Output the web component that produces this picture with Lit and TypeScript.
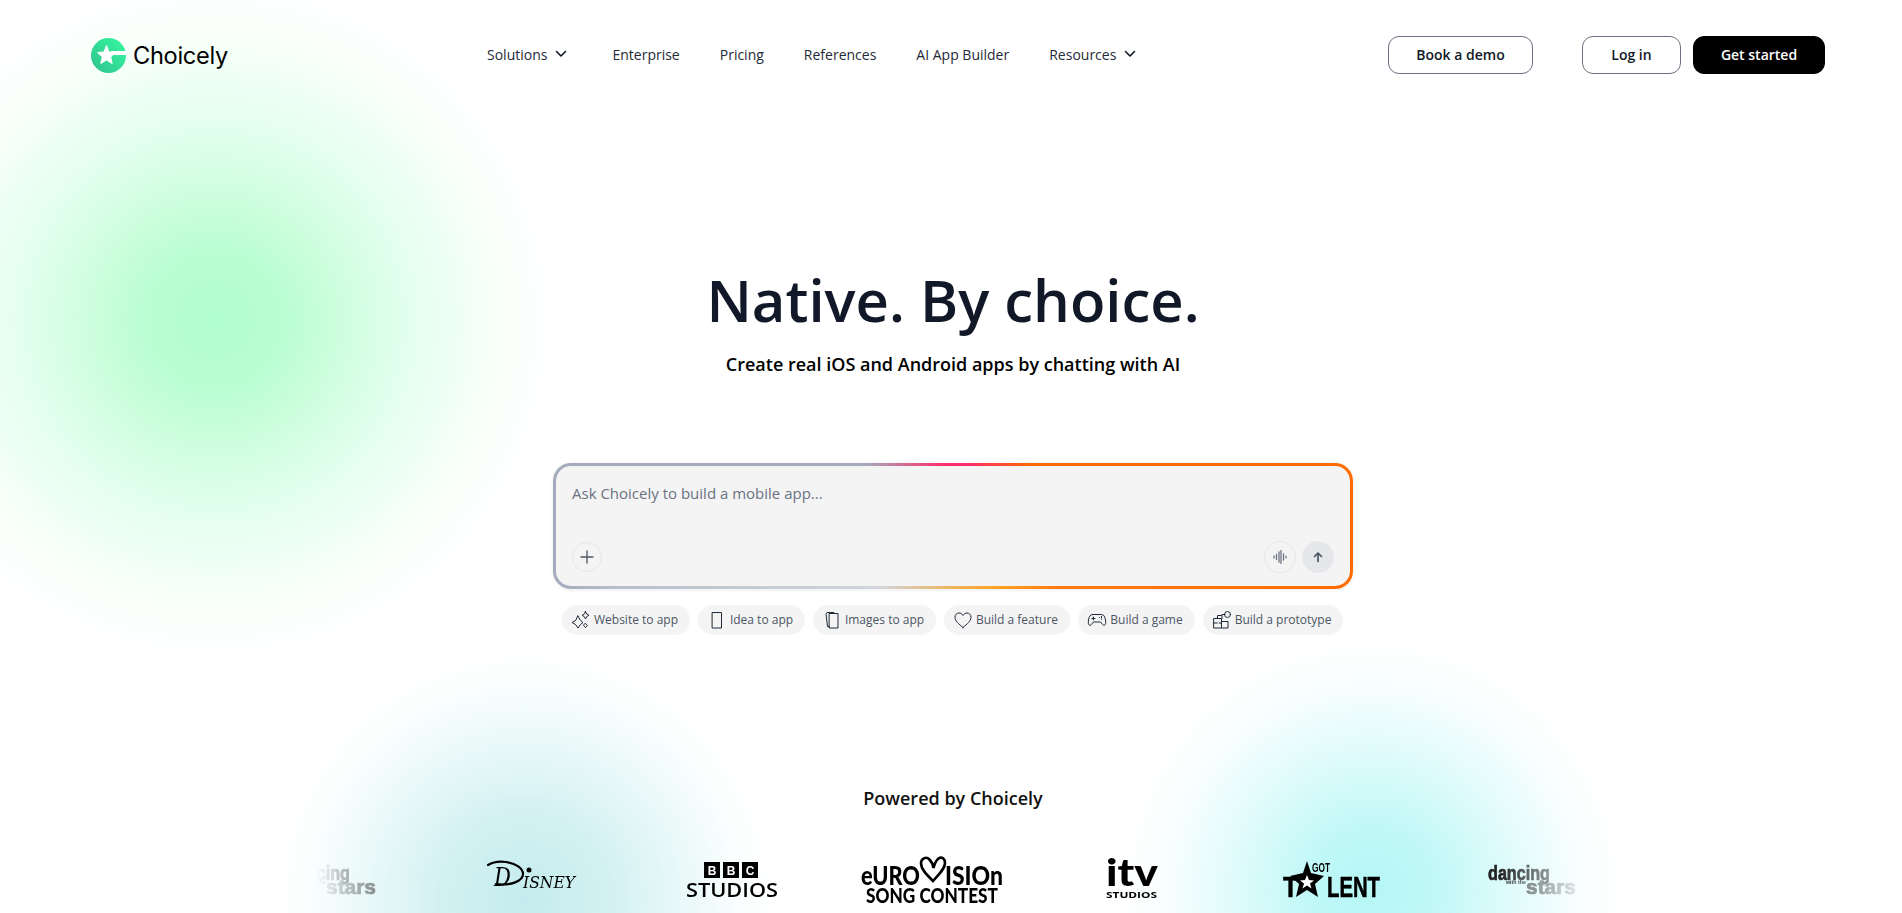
import { LitElement, html, css, svg } from "lit";
import { customElement } from "lit/decorators.js";

const chevron = html`<svg class="chev" viewBox="0 0 12 8" width="12" height="8"><path d="M1.5 1.5 6 6l4.5-4.5" fill="none" stroke="#111827" stroke-width="1.6" stroke-linecap="round" stroke-linejoin="round"/></svg>`;

const chipIcons: Record<string, unknown> = {
  sparkle: svg`<path d="M7 6 9.500 10.500 12 12.500 9.500 14.500 7 18 4.500 14.500 1 12.500 4.500 10.500Z M14.500 1.500 15.700 4 18 5.300 15.700 6.600 14.500 9 13.300 6.600 11 5.300 13.300 4Z M14.500 13.500l1.800 2-1.800 2-1.800-2Z"/>`,
  phone: svg`<rect x="5.500" y="2.500" width="9" height="15.500"/>`,
  images: svg`<rect x="7.500" y="3.500" width="8.500" height="14.500"/><path d="M7.500 16.500H5.500L4 4.200 5 2.500H12L13 3.500"/>`,
  heart: svg`<path d="M10 17.500C5.500 13.800 2 11 2 7.200 2 4.600 4 3 6 3c1.700 0 3.100.9 4 2.400C10.900 3.900 12.300 3 14 3c2 0 4 1.600 4 4.200 0 3.800-3.500 6.600-8 10.300z"/>`,
  game: svg`<path d="M5.500 4.500h9c2.500 0 3.500 2.500 4 5.500.4 2.500.3 5-1.200 5.300-1.500.3-2.500-2.100-3.800-3.300H6.500c-1.300 1.200-2.300 3.600-3.800 3.300C1.200 15 1.100 12.500 1.500 10c.5-3 1.500-5.500 4-5.500zM4.800 8.500h3.200M6.400 7v3M12.500 7.500h.01M14.500 9.500h.01M14.500 6.500v1.500"/>`,
  proto: svg`<path d="M2 8.500h7.500V18H2zM2 13h3.200M7 13h2.500M9.500 11.500V18H16v-6.500H9.500M10 8.500V4.500h3M5.500 8.500V5.500h4"/><circle cx="15.500" cy="4.500" r="3"/>`,
};

const chips = [
  ["sparkle", "Website to app", 128],
  ["phone", "Idea to app", 107],
  ["images", "Images to app", 123],
  ["heart", "Build a feature", 126],
  ["game", "Build a game", 117],
  ["proto", "Build a prototype", 140],
] as const;

const dancing = html`<svg class="logo" width="88" height="30" viewBox="0 0 88 30">
  <text x="0" y="14.500" class="dw" textLength="62" lengthAdjust="spacingAndGlyphs">dancing</text>
  <text x="18" y="19" class="dws" textLength="20" lengthAdjust="spacingAndGlyphs">with the</text>
  <text x="38" y="29" class="dw st" textLength="50" lengthAdjust="spacingAndGlyphs">stars</text>
</svg>`;

const logos = [
  dancing,
  html`<svg class="logo" width="90" height="38" viewBox="0 0 90 38">
    <path d="M1 4C6 1 13 0 19 1 29 2.500 36 7 36 13 36 20 24 25 9 23" fill="none" stroke="#000" stroke-width="2.200" stroke-linecap="round"/>
    <text x="7" y="25" class="disney" textLength="17" lengthAdjust="spacingAndGlyphs">D</text>
    <text x="36" y="27" class="disney2" textLength="52" lengthAdjust="spacingAndGlyphs">ISNEY</text>
    <circle cx="42" cy="9" r="2.500" fill="#000"/>
  </svg>`,
  html`<svg class="logo" width="92" height="36" viewBox="0 0 92 36">
    <rect x="18" y="0" width="16" height="16" /><rect x="37" y="0" width="16" height="16" /><rect x="56" y="0" width="16" height="16" />
    <text x="26" y="12.500" class="bbc">B</text><text x="45" y="12.500" class="bbc">B</text><text x="64" y="12.500" class="bbc">C</text>
    <text x="0" y="35" class="stud" textLength="92" lengthAdjust="spacingAndGlyphs">STUDIOS</text>
  </svg>`,
  html`<svg class="logo" width="142" height="48" viewBox="0 0 142 48">
    <text x="0" y="29" class="euro" textLength="59" lengthAdjust="spacingAndGlyphs">eURO</text>
    <path d="M72 25C65 18 60 13 60 7 60 3 65 0 68 3c2 2 4 5 4.500 9 1-4 3-8 5-9.500C81 0 84 3 84 7 84 13 78 18 72 25Z" fill="none" stroke="#000" stroke-width="2.600"/>
    <text x="84" y="29" class="euro" textLength="58" lengthAdjust="spacingAndGlyphs">ISIOn</text>
    <text x="5" y="47" class="song" textLength="132" lengthAdjust="spacingAndGlyphs">SONG CONTEST</text>
  </svg>`,
  html`<svg class="logo" width="52" height="38" viewBox="0 0 52 38">
    <text x="0" y="25" class="itv" textLength="52" lengthAdjust="spacingAndGlyphs">itv</text>
    <text x="0" y="37" class="itvs" textLength="51" lengthAdjust="spacingAndGlyphs">STUDIOS</text>
  </svg>`,
  html`<svg class="logo" width="98" height="38" viewBox="0 0 98 38">
    <text x="29" y="11" class="got" textLength="18" lengthAdjust="spacingAndGlyphs">GOT</text>
    <text x="0" y="36" class="tal" textLength="15" lengthAdjust="spacingAndGlyphs">T</text>
    <path d="M24 0 28 12 41 15 32 23 35 36 24 29 13 36 16 23 7 15 20 12Z" />
    <path d="M24 14 26 19 31 19.500 27 22.500 28.500 27.500 24 24.500 19.500 27.500 21 22.500 17 19.500 22 19Z" fill="#fff"/>
    <text x="44" y="36" class="tal" textLength="53" lengthAdjust="spacingAndGlyphs">LENT</text>
  </svg>`,
  dancing,
];

@customElement("app-root")
export class AppRoot extends LitElement {
  static styles = css`
    :host { display: block; }
    * { box-sizing: border-box; }
    .page {
      height: 913px; overflow: hidden; display: flex; flex-direction: column;
      font-family: "Open Sans", sans-serif; color: #111827;
      background:
        radial-gradient(circle 350px at 215px 320px, #b0fdcd 0%, #b8fdd2 18%, #d0fee0 38%, #e6fff0 58%, #f9fffb 82%, rgba(255,255,255,0) 100%),
        radial-gradient(circle 250px at 1372px 890px, #b5f7f6 0%, #c0f8f7 25%, #e0fbfb 55%, #f8fefe 82%, rgba(255,255,255,0) 100%),
        radial-gradient(circle 250px at 525px 900px, #c4ecee 0%, #d4f1f2 35%, #ebf9f9 65%, #fbfefe 88%, rgba(255,255,255,0) 100%),
        #fff;
    }
    header { height: 110px; flex: none; display: flex; align-items: center; padding: 0 77px 0 91px; }
    .brand { display: flex; align-items: center; gap: 7px; width: 396px; font-family: Inter, sans-serif; font-size: 23.600px; color: #000; letter-spacing: -0.300px; }
    nav { display: flex; gap: 40px; font-size: 14px; color: #1f2937; flex: 1; padding-bottom: 2px; }
    .item { display: flex; align-items: center; gap: 8px; white-space: nowrap; }
    .item .chev { margin-right: 5px; }
    .chev { display: block; }
    .btn { height: 38px; display: flex; align-items: center; justify-content: center; border-radius: 11px; border: 1px solid #6b7280; font-size: 14px; font-weight: 600; color: #111827; background: #fff; padding-bottom: 2px; }
    .demo { width: 145px; margin-right: 49px; }
    .login { width: 99px; margin-right: 12px; }
    .start { width: 132px; background: #000; border-color: #000; color: #fff; }
    main { display: flex; flex-direction: column; align-items: center; flex: 1; min-height: 0; padding-left: 4px; }
    h1 { margin: 152px 0 0; font-size: 58px; line-height: 75px; font-weight: 600; color: #111827; }
    .sub { margin: 13px 0 0; font-size: 18px; line-height: 28px; font-weight: 600; color: #000; }
    .prompt {
      margin-top: 85px; width: 800px; height: 127px; border-radius: 18px; border: 3px solid transparent;
      display: flex; flex-direction: column; justify-content: space-between; padding: 16px 16px 13px;
      box-shadow: 0 1px 4px rgba(0,0,0,.08);
      background:
        linear-gradient(#f4f4f5, #f4f4f5) padding-box,
        linear-gradient(90deg, #a3abbd 0%, #a3abbd 39%, #ff2d6a 49%, #ff2d6a 52%, #ff6b00 60%, #ff6b00 100%) top / 100% 50% no-repeat border-box,
        linear-gradient(90deg, #a3abbd 0%, #b8bfcc 8%, #d1d5db 41%, #f2b04e 51%, #ffa020 56%, #ff7a10 63%, #ff6b00 100%) bottom / 100% 50% no-repeat border-box;
    }
    .ph { font-size: 15px; line-height: 22px; color: #6b7280; }
    .tools { display: flex; align-items: center; justify-content: space-between; }
    .right { display: flex; gap: 6px; }
    .round { display: flex; align-items: center; justify-content: center; border-radius: 50%; border: 1px solid #e5e7eb; }
    .plus { width: 30px; height: 30px; }
    .mic { width: 32px; height: 32px; }
    .send { width: 32px; height: 32px; background: #e5e7eb; }
    .chips { margin: 16px 2px 0 0; display: flex; gap: 8px; }
    .chip { height: 30px; border-radius: 15px; background: #f4f4f5; display: flex; align-items: center; justify-content: center; gap: 3px; font-size: 12px; color: #4b5563; white-space: nowrap; padding: 0 2px 1px 0; }
    .chip svg { fill: none; stroke: #1f2937; stroke-width: 1; stroke-linejoin: round; stroke-linecap: round; flex: none; }
    .powered { margin: 151px 0 0; font-size: 18px; line-height: 24px; font-weight: 600; color: #111; }
    .strip {
      margin-top: 43px; width: 1272px; height: 60px; overflow: hidden; flex: none;
      -webkit-mask-image: linear-gradient(90deg, transparent 0, #000 7%, #000 93%, transparent 100%);
      mask-image: linear-gradient(90deg, transparent 0, #000 7%, #000 93%, transparent 100%);
    }
    .track { display: flex; margin-left: -85px; width: 1400px; }
    .slot { width: 200px; height: 60px; flex: none; display: flex; align-items: center; justify-content: center; padding-bottom: 6px; }
    .logo { display: block; overflow: visible; }
    .dw { font: 700 21px "Liberation Sans", sans-serif; fill: #222; stroke: #222; stroke-width: .7px; }
    .st { fill: #555; stroke: #555; }
    .dws { font: 700 5px "Liberation Sans", sans-serif; fill: #222; }
    .disney { font: italic 400 26px "DejaVu Serif", serif; }
    .disney2 { font: italic 400 17px "DejaVu Serif", serif; }
    .bbc { font: 700 12px "Liberation Sans", sans-serif; fill: #fff; text-anchor: middle; }
    .stud { font: 600 19px "Open Sans", sans-serif; }
    .euro { font: 900 26px "Lato", sans-serif; }
    .song { font: 900 21px "Lato", sans-serif; }
    .itv { font: 900 38px "Lato", sans-serif; }
    .itvs { font: 700 9px "Open Sans", sans-serif; }
    .got { font: 700 12px "Liberation Sans", sans-serif; }
    .tal { font: 700 29px "Liberation Sans", sans-serif; stroke: #000; stroke-width: .6px; }
  `;

  render() {
    return html`<div class="page">
      <header>
        <div class="brand">
          <svg width="35" height="35" viewBox="0 0 35 35">
            <defs><linearGradient id="lg" x1="0" y1="1" x2="1" y2="0"><stop offset="0" stop-color="#2fbf8e"/><stop offset="1" stop-color="#37fb9f"/></linearGradient></defs>
            <circle cx="17.500" cy="17.500" r="17.500" fill="url(#lg)"/>
            <path d="M15.500 7.500 18 14 24.500 14.500 19.700 19 21.200 25.500 15.500 22 9.800 25.500 11.300 19 6.500 14.500 13 14Z" fill="#fff" stroke="#fff" stroke-linejoin="round"/>
            <rect x="20" y="13" width="15" height="4" fill="#fff"/>
          </svg>
          <span>Choicely</span>
        </div>
        <nav>
          <span class="item">Solutions ${chevron}</span>
          <span class="item">Enterprise</span>
          <span class="item">Pricing</span>
          <span class="item">References</span>
          <span class="item">AI App Builder</span>
          <span class="item">Resources ${chevron}</span>
        </nav>
        <div class="btn demo">Book a demo</div>
        <div class="btn login">Log in</div>
        <div class="btn start">Get started</div>
      </header>
      <main>
        <h1>Native. By choice.</h1>
        <p class="sub">Create real iOS and Android apps by chatting with AI</p>
        <div class="prompt">
          <div class="ph">Ask Choicely to build a mobile app...</div>
          <div class="tools">
            <div class="round plus"><svg width="14" height="14" viewBox="0 0 14 14"><path d="M7 1v12M1 7h12" stroke="#4b5563" stroke-width="1.300" stroke-linecap="round"/></svg></div>
            <div class="right">
              <div class="round mic"><svg width="14" height="14" viewBox="0 0 14 14"><path d="M1 6v2M3.500 4.500v5M6 2v10M8 .5v13M10.500 4v6M13 6.200v1.600" stroke="#6b7280" stroke-width="1.300" stroke-linecap="round"/></svg></div>
              <div class="round send"><svg width="12" height="12" viewBox="0 0 12 12"><path d="M6 10.500V2M2.500 5.500 6 2l3.500 3.500" fill="none" stroke="#4b5563" stroke-width="1.700" stroke-linecap="round" stroke-linejoin="round"/></svg></div>
            </div>
          </div>
        </div>
        <div class="chips">
          ${chips.map(([ic, label, w]) => html`<div class="chip" style="width:${w}px">
            <svg width="20" height="20" viewBox="0 0 20 20">${chipIcons[ic]}</svg>${label}</div>`)}
        </div>
        <p class="powered">Powered by Choicely</p>
        <div class="strip"><div class="track">${logos.map((l) => html`<div class="slot">${l}</div>`)}</div></div>
      </main>
    </div>`;
  }
}
